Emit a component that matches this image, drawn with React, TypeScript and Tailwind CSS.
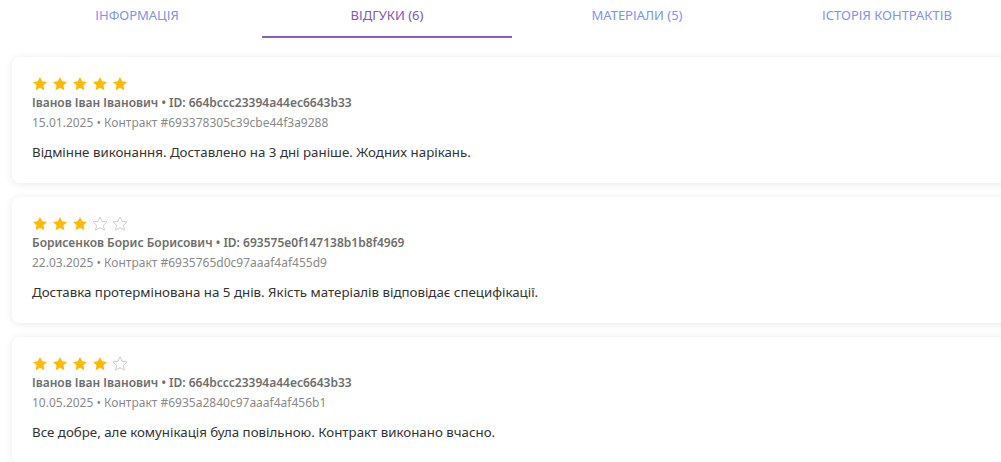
import React from 'react';

interface Review {
  rating: number;
  author: string;
  authorId: string;
  date: string;
  contract: string;
  text: string;
}

const TABS = ['Інформація', 'Відгуки (6)', 'Матеріали (5)', 'Історія контрактів'];

const REVIEWS: Review[] = [
  {
    rating: 5,
    author: 'Іванов Іван Іванович',
    authorId: '664bccc23394a44ec6643b33',
    date: '15.01.2025',
    contract: '693378305c39cbe44f3a9288',
    text: 'Відмінне виконання. Доставлено на 3 дні раніше. Жодних нарікань.',
  },
  {
    rating: 3,
    author: 'Борисенков Борис Борисович',
    authorId: '693575e0f147138b1b8f4969',
    date: '22.03.2025',
    contract: '6935765d0c97aaaf4af455d9',
    text: 'Доставка протермінована на 5 днів. Якість матеріалів відповідає специфікації.',
  },
  {
    rating: 4,
    author: 'Іванов Іван Іванович',
    authorId: '664bccc23394a44ec6643b33',
    date: '10.05.2025',
    contract: '6935a2840c97aaaf4af456b1',
    text: 'Все добре, але комунікація була повільною. Контракт виконано вчасно.',
  },
];

const STAR_PATH =
  'M8 0.9l2.15 4.45 4.9.6-3.6 3.35.95 4.85L8 11.75l-4.4 2.4.95-4.85L0.95 5.95l4.9-.6z';

function Star({ filled }: { filled: boolean }) {
  return (
    <svg width="16" height="16" viewBox="0 0 16 16" className="shrink-0">
      {filled ? (
        <path d={STAR_PATH} fill="#ffb900" />
      ) : (
        <path d={STAR_PATH} fill="none" stroke="#c8c8c8" strokeWidth="0.9" strokeLinejoin="round" />
      )}
    </svg>
  );
}

function ReviewCard({ review }: { review: Review }) {
  return (
    <div className="bg-white rounded-lg shadow-[0_1px_8px_rgba(0,0,0,0.09)] px-5 pt-[19px] pb-5">
      <div className="flex gap-1 h-4">
        {[1, 2, 3, 4, 5].map((n) => (
          <Star key={n} filled={n <= review.rating} />
        ))}
      </div>
      <div className="mt-[1px] text-xs leading-5 font-semibold text-[#6e6e6e]">
        {review.author} • ID: {review.authorId}
      </div>
      <div className="text-xs leading-5 text-[#8a8a8a]">
        {review.date} • Контракт #{review.contract}
      </div>
      <p className="mt-[9px] text-[13.3px] leading-[21px] text-[#333333]">{review.text}</p>
    </div>
  );
}

export default function App() {
  const active = 1;

  return (
    <div className="w-full h-screen overflow-hidden bg-white font-['Noto_Sans',sans-serif]">
      <div className="pl-3">
        <div className="w-[1000px]">
          {/* Tabs */}
          <div className="flex">
            {TABS.map((tab, i) => (
              <div
                key={tab}
                className={`flex-1 h-[38px] flex items-center justify-center pb-[5px] text-[13px] uppercase border-b-2 ${
                  i === active ? 'text-[#7e57c2] border-[#8a5cbd]' : 'text-[#7f93ef] border-transparent'
                }`}
              >
                {tab}
              </div>
            ))}
          </div>

          {/* Reviews */}
          <div className="mt-[19px] flex flex-col gap-[14px]">
            {REVIEWS.map((review, i) => (
              <ReviewCard key={i} review={review} />
            ))}
          </div>
        </div>
      </div>
    </div>
  );
}
